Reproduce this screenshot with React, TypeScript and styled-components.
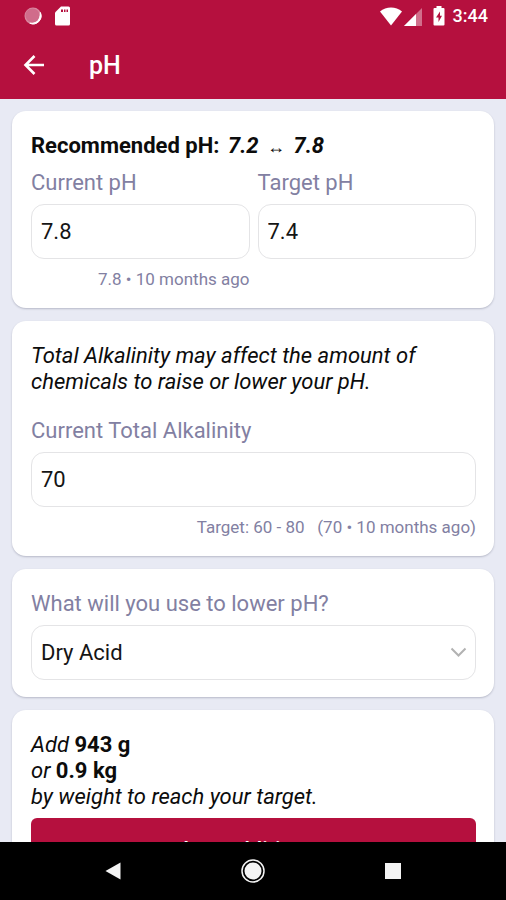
import React, { useState } from "react";
import styled, { createGlobalStyle } from "styled-components";

const GlobalStyle = createGlobalStyle`
  * { box-sizing: border-box; }
  body {
    margin: 0;
    background: #e8eaf4;
    font-family: Roboto, "Liberation Sans", sans-serif;
    font-size: 22px;
    line-height: 26px;
    color: #0c0c0c;
  }
  button, input, select { font: inherit; }
`;

const Screen = styled.div`
  display: flex;
  flex-direction: column;
  height: 100vh;
  overflow: hidden;
`;

const Header = styled.header`
  flex: none;
  background: #b5103e;
  color: #fff;
`;

const StatusBar = styled.div`
  display: flex;
  align-items: center;
  justify-content: space-between;
  height: 32px;
  padding: 0 18px 0 24px;
`;

const StatusGroup = styled.div<{ $gap: number }>`
  display: flex;
  align-items: center;
  gap: ${(p) => p.$gap}px;
`;

const Clock = styled.time`
  margin-left: 8px;
  font-size: 18px;
  font-weight: 500;
  line-height: 32px;
`;

const AppBar = styled.div`
  display: flex;
  align-items: center;
  gap: 41px;
  height: 67px;
  padding: 0 20px;
`;

const IconButton = styled.button`
  display: flex;
  align-items: center;
  justify-content: center;
  width: 28px;
  height: 32px;
  padding: 0;
  border: 0;
  background: none;
  color: inherit;
`;

const Title = styled.h1`
  margin: 0;
  font-size: 25px;
  font-weight: 500;
  line-height: 32px;
`;

const Content = styled.main`
  flex: 1;
  min-height: 0;
  display: flex;
  flex-direction: column;
  gap: 13px;
  padding: 12px 12px 0;
  overflow: hidden;
`;

const Card = styled.section`
  flex: none;
  padding: 22px 18px 17px 19px;
  border-radius: 14px;
  background: #fff;
  box-shadow: 0 1px 2px rgba(70, 74, 100, 0.3);
`;

const Heading = styled.h2`
  margin: 0;
  font-size: 22px;
  font-weight: 700;
  line-height: 26px;
`;

const Range = styled.em`
  margin-left: 3px;
`;

const Arrow = styled.span`
  margin: 0 3px;
  font-size: 18px;
`;

const FieldRow = styled.div`
  display: grid;
  grid-template-columns: 1fr 1fr;
  gap: 8px;
  margin-top: 10px;
`;

const Field = styled.div`
  display: flex;
  flex-direction: column;
`;

const Label = styled.label`
  margin-bottom: 8px;
  color: #8280a2;
`;

const TextInput = styled.input`
  width: 100%;
  height: 55px;
  padding: 0 9px;
  border: 1px solid #e4e4e6;
  border-radius: 13px;
  background: #fff;
  color: #151515;
`;

const Hint = styled.p`
  margin: 8px 0 0;
  color: #8280a2;
  font-size: 17px;
  line-height: 24px;
  text-align: right;
  white-space: pre;
`;

const Note = styled.p<{ $gap: number }>`
  margin: 0 0 ${(p) => p.$gap}px;
  font-style: italic;
`;

const Amount = styled.strong`
  font-style: normal;
  font-weight: 700;
`;

const SelectBox = styled.div`
  display: grid;
  align-items: center;
`;

const Select = styled.select`
  grid-area: 1 / 1;
  width: 100%;
  height: 55px;
  padding: 0 40px 0 9px;
  border: 1px solid #e4e4e6;
  border-radius: 13px;
  appearance: none;
  background: #fff;
  color: #151515;
`;

const Chevron = styled.svg`
  grid-area: 1 / 1;
  justify-self: end;
  margin-right: 9px;
  pointer-events: none;
`;

const PrimaryButton = styled.button`
  width: 100%;
  height: 64px;
  padding: 0;
  border: 0;
  border-radius: 6px;
  background: #b5103e;
  color: #fff;
  font-weight: 500;
`;

const NavBar = styled.nav`
  flex: none;
  display: grid;
  grid-template-columns: repeat(3, 140px);
  justify-content: center;
  justify-items: center;
  align-items: center;
  height: 58px;
  background: #000;
  color: #f4f4f4;
`;

export default function App() {
  const [current, setCurrent] = useState("7.8");
  const [target, setTarget] = useState("7.4");
  const [alkalinity, setAlkalinity] = useState("70");
  const [chemical, setChemical] = useState("Dry Acid");

  return (
    <Screen>
      <GlobalStyle />
      <Header>
        <StatusBar>
          <StatusGroup $gap={13}>
            <svg width="18" height="18" viewBox="0 0 18 18" aria-hidden="true">
              <circle cx="9" cy="9" r="8.5" fill="#d9879f" />
              <path d="M16.3 5.5a8 8 0 0 1-10.5 10.7c6 .8 10.3-4.5 10.5-10.7z" fill="#fff" stroke="#fff" />
              <circle cx="8.5" cy="8.5" r="7" fill="#d06c8b" />
            </svg>
            <svg width="16" height="20" viewBox="0 0 16 20" aria-hidden="true">
              <path d="M6 .5h7.5A1.5 1.5 0 0 1 15 2v16a1.5 1.5 0 0 1-1.5 1.5h-12A1.5 1.5 0 0 1 0 18V6.5z" fill="#fff" />
              <path d="M6 3.5h2V6H6zM9 3.500h1.500V6H9zM11.500 3.500H13V6h-1.500z" fill="#b5103e" />
            </svg>
          </StatusGroup>
          <StatusGroup $gap={0}>
            <svg width="22" height="19" viewBox="0 0 22 19" aria-hidden="true">
              <path d="M0 4.500C6-.8 16-.8 22 4.500L11 18.500z" fill="#fff" />
            </svg>
            <svg width="31" height="19" viewBox="0 0 31 19" aria-hidden="true">
              <path d="M20 1v18H2z" fill="#d16f8b" />
              <path d="M14 7v12H2z" fill="#fff" />
            </svg>
            <svg width="12" height="20" viewBox="0 0 12 20" aria-hidden="true">
              <path d="M3.500 0h5v2H10.500a1 1 0 0 1 1 1v15.500a1 1 0 0 1-1 1h-9a1 1 0 0 1-1-1V3a1 1 0 0 1 1-1h2z" fill="#fff" />
              <path d="M7 5.500 3 11.500h2.500V16L9 9.800H7z" fill="#b5103e" />
            </svg>
            <Clock>3:44</Clock>
          </StatusGroup>
        </StatusBar>
        <AppBar>
          <IconButton type="button" aria-label="Back">
            <svg width="22" height="22" viewBox="0 0 22 22" fill="none" stroke="currentColor" strokeWidth="2.600" aria-hidden="true">
              <path d="M21 10H2.500M11.500 1 2.500 10l9 9" />
            </svg>
          </IconButton>
          <Title>pH</Title>
        </AppBar>
      </Header>

      <Content>
        <Card>
          <Heading>
            Recommended pH:{" "}
            <Range>
              7.2 <Arrow>↔</Arrow> 7.8
            </Range>
          </Heading>
          <FieldRow>
            <Field>
              <Label htmlFor="current-ph">Current pH</Label>
              <TextInput id="current-ph" inputMode="decimal" value={current} onChange={(e) => setCurrent(e.target.value)} />
              <Hint>7.8 • 10 months ago</Hint>
            </Field>
            <Field>
              <Label htmlFor="target-ph">Target pH</Label>
              <TextInput id="target-ph" inputMode="decimal" value={target} onChange={(e) => setTarget(e.target.value)} />
            </Field>
          </FieldRow>
        </Card>

        <Card>
          <Note $gap={23}>Total Alkalinity may affect the amount of chemicals to raise or lower your pH.</Note>
          <Field>
            <Label htmlFor="alkalinity">Current Total Alkalinity</Label>
            <TextInput id="alkalinity" inputMode="numeric" value={alkalinity} onChange={(e) => setAlkalinity(e.target.value)} />
            <Hint>{"Target: 60 - 80   (70 • 10 months ago)"}</Hint>
          </Field>
        </Card>

        <Card>
          <Field>
            <Label htmlFor="chemical">What will you use to lower pH?</Label>
            <SelectBox>
              <Select id="chemical" value={chemical} onChange={(e) => setChemical(e.target.value)}>
                <option>Dry Acid</option>
              </Select>
              <Chevron width="17" height="11" viewBox="0 0 17 11" fill="none" stroke="#b2b2b2" strokeWidth="2" aria-hidden="true">
                <path d="m1.500 1.500 7 7 7-7" />
              </Chevron>
            </SelectBox>
          </Field>
        </Card>

        <Card>
          <Note $gap={8}>
            Add <Amount>943 g</Amount>
            <br />
            or <Amount>0.9 kg</Amount>
            <br />
            by weight to reach your target.
          </Note>
          <PrimaryButton type="button">Log addition...</PrimaryButton>
        </Card>
      </Content>

      <NavBar aria-label="System">
        <IconButton type="button" aria-label="Back">
          <svg width="16" height="18" viewBox="0 0 16 18" aria-hidden="true">
            <path d="M15.500.5v17L.5 9z" fill="currentColor" />
          </svg>
        </IconButton>
        <IconButton type="button" aria-label="Home">
          <svg width="24" height="24" viewBox="0 0 24 24" aria-hidden="true">
            <circle cx="12" cy="12" r="11" fill="none" stroke="currentColor" strokeWidth="1.500" />
            <circle cx="12" cy="12" r="8.500" fill="currentColor" />
          </svg>
        </IconButton>
        <IconButton type="button" aria-label="Recent apps">
          <svg width="16" height="16" viewBox="0 0 16 16" aria-hidden="true">
            <path d="M0 0h16v16H0z" fill="currentColor" />
          </svg>
        </IconButton>
      </NavBar>
    </Screen>
  );
}
